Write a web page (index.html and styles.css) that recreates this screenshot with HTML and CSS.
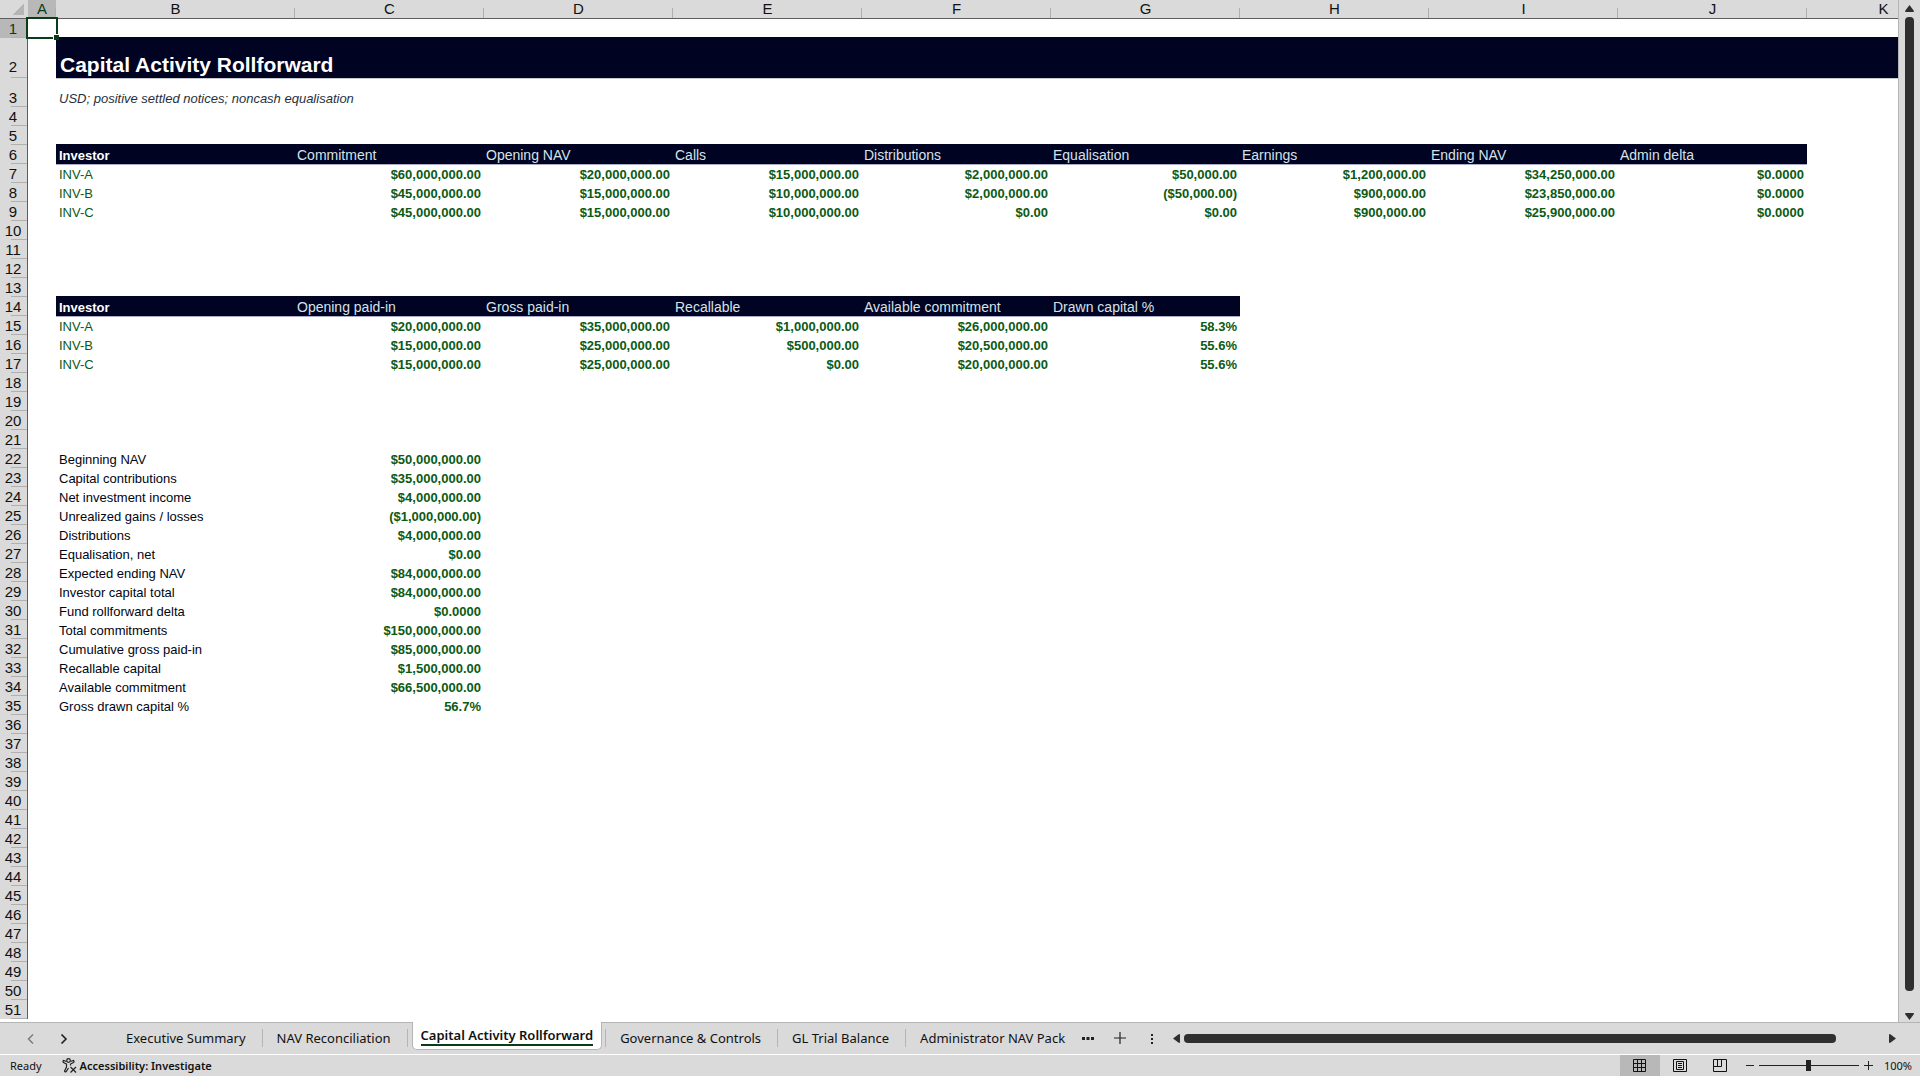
FILE: index.html
```html
<!DOCTYPE html>
<html lang="en">
<head>
    <meta charset="UTF-8">
    <meta name="viewport" content="width=device-width, initial-scale=1.0">
    <title>Capital Activity Rollforward</title>
    <link rel="stylesheet" href="styles.css">
</head>
<body>
    <main class="workspace">
        <div class="grid-area">
            <table class="sheet">
                <colgroup>
                    <col class="col-rownum">
                    <col class="col-a">
                    <col class="col-b">
                    <col class="col-data" span="8">
                    <col class="col-k">
                </colgroup>
                <thead>
                    <tr>
                        <th class="corner"></th>
                        <th class="active">A</th>
                        <th>B</th>
                        <th>C</th>
                        <th>D</th>
                        <th>E</th>
                        <th>F</th>
                        <th>G</th>
                        <th>H</th>
                        <th>I</th>
                        <th>J</th>
                        <th>K</th>
                    </tr>
                </thead>
                <tbody>
                    <tr><th class="active">1</th><td class="selected"><span class="fill-handle"></span></td></tr>
                    <tr class="title-row"><th>2</th><td></td><td class="title" colspan="10">Capital Activity Rollforward</td></tr>
                    <tr class="subtitle-row"><th>3</th><td></td><td class="subtitle" colspan="10">USD; positive settled notices; noncash equalisation</td></tr>
                    <tr><th>4</th></tr>
                    <tr><th>5</th></tr>
                    <tr class="head"><th>6</th><td></td><td>Investor</td><td>Commitment</td><td>Opening NAV</td><td>Calls</td><td>Distributions</td><td>Equalisation</td><td>Earnings</td><td>Ending NAV</td><td>Admin delta</td></tr>
                    <tr class="investor"><th>7</th><td></td><td>INV-A</td><td>$60,000,000.00</td><td>$20,000,000.00</td><td>$15,000,000.00</td><td>$2,000,000.00</td><td>$50,000.00</td><td>$1,200,000.00</td><td>$34,250,000.00</td><td>$0.0000</td></tr>
                    <tr class="investor"><th>8</th><td></td><td>INV-B</td><td>$45,000,000.00</td><td>$15,000,000.00</td><td>$10,000,000.00</td><td>$2,000,000.00</td><td>($50,000.00)</td><td>$900,000.00</td><td>$23,850,000.00</td><td>$0.0000</td></tr>
                    <tr class="investor"><th>9</th><td></td><td>INV-C</td><td>$45,000,000.00</td><td>$15,000,000.00</td><td>$10,000,000.00</td><td>$0.00</td><td>$0.00</td><td>$900,000.00</td><td>$25,900,000.00</td><td>$0.0000</td></tr>
                    <tr><th>10</th></tr>
                    <tr><th>11</th></tr>
                    <tr><th>12</th></tr>
                    <tr><th>13</th></tr>
                    <tr class="head"><th>14</th><td></td><td>Investor</td><td>Opening paid-in</td><td>Gross paid-in</td><td>Recallable</td><td>Available commitment</td><td>Drawn capital %</td></tr>
                    <tr class="investor"><th>15</th><td></td><td>INV-A</td><td>$20,000,000.00</td><td>$35,000,000.00</td><td>$1,000,000.00</td><td>$26,000,000.00</td><td>58.3%</td></tr>
                    <tr class="investor"><th>16</th><td></td><td>INV-B</td><td>$15,000,000.00</td><td>$25,000,000.00</td><td>$500,000.00</td><td>$20,500,000.00</td><td>55.6%</td></tr>
                    <tr class="investor"><th>17</th><td></td><td>INV-C</td><td>$15,000,000.00</td><td>$25,000,000.00</td><td>$0.00</td><td>$20,000,000.00</td><td>55.6%</td></tr>
                    <tr><th>18</th></tr>
                    <tr><th>19</th></tr>
                    <tr><th>20</th></tr>
                    <tr><th>21</th></tr>
                    <tr><th>22</th><td></td><td>Beginning NAV</td><td>$50,000,000.00</td></tr>
                    <tr><th>23</th><td></td><td>Capital contributions</td><td>$35,000,000.00</td></tr>
                    <tr><th>24</th><td></td><td>Net investment income</td><td>$4,000,000.00</td></tr>
                    <tr><th>25</th><td></td><td>Unrealized gains / losses</td><td>($1,000,000.00)</td></tr>
                    <tr><th>26</th><td></td><td>Distributions</td><td>$4,000,000.00</td></tr>
                    <tr><th>27</th><td></td><td>Equalisation, net</td><td>$0.00</td></tr>
                    <tr><th>28</th><td></td><td>Expected ending NAV</td><td>$84,000,000.00</td></tr>
                    <tr><th>29</th><td></td><td>Investor capital total</td><td>$84,000,000.00</td></tr>
                    <tr><th>30</th><td></td><td>Fund rollforward delta</td><td>$0.0000</td></tr>
                    <tr><th>31</th><td></td><td>Total commitments</td><td>$150,000,000.00</td></tr>
                    <tr><th>32</th><td></td><td>Cumulative gross paid-in</td><td>$85,000,000.00</td></tr>
                    <tr><th>33</th><td></td><td>Recallable capital</td><td>$1,500,000.00</td></tr>
                    <tr><th>34</th><td></td><td>Available commitment</td><td>$66,500,000.00</td></tr>
                    <tr><th>35</th><td></td><td>Gross drawn capital %</td><td>56.7%</td></tr>
                    <tr><th>36</th></tr>
                    <tr><th>37</th></tr>
                    <tr><th>38</th></tr>
                    <tr><th>39</th></tr>
                    <tr><th>40</th></tr>
                    <tr><th>41</th></tr>
                    <tr><th>42</th></tr>
                    <tr><th>43</th></tr>
                    <tr><th>44</th></tr>
                    <tr><th>45</th></tr>
                    <tr><th>46</th></tr>
                    <tr><th>47</th></tr>
                    <tr><th>48</th></tr>
                    <tr><th>49</th></tr>
                    <tr><th>50</th></tr>
                    <tr><th>51</th></tr>
                </tbody>
            </table>
        </div>
        <div class="vscroll">
            <button aria-label="Scroll up"><svg width="9" height="7" viewBox="0 0 9 7"><path d="M4.5 0 L9 6 Q9 7 8 7 H1 Q0 7 0 6 Z" fill="#2f2f2f"/></svg></button>
            <div class="thumb"></div>
            <button aria-label="Scroll down"><svg width="9" height="7" viewBox="0 0 9 7"><path d="M4.5 7 L9 1 Q9 0 8 0 H1 Q0 0 0 1 Z" fill="#2f2f2f"/></svg></button>
        </div>
    </main>

    <nav class="tab-bar">
        <div class="tab-nav">
            <button aria-label="Previous sheet"><svg width="8" height="10" viewBox="0 0 8 10"><path d="M6 0.5 L1.5 5 L6 9.5" fill="none" stroke="#777" stroke-width="1.4"/></svg></button>
            <button aria-label="Next sheet"><svg width="8" height="10" viewBox="0 0 8 10"><path d="M1.5 0.5 L6 5 L1.5 9.5" fill="none" stroke="#222" stroke-width="1.6"/></svg></button>
        </div>
        <div class="tabs">
            <button class="tab">Executive Summary</button>
            <button class="tab">NAV Reconciliation</button>
            <button class="tab current"><span>Capital Activity Rollforward</span></button>
            <button class="tab">Governance &amp; Controls</button>
            <button class="tab">GL Trial Balance</button>
            <button class="tab last">Administrator NAV Pack</button>
        </div>
        <div class="tab-tools">
            <button aria-label="More sheets"><svg width="12" height="12" viewBox="0 0 12 12"><path d="M0 5h3v3H0z M4.5 5h3v3h-3z M9 5h3v3H9z" fill="#222"/></svg></button>
            <button aria-label="New sheet"><svg width="12" height="12" viewBox="0 0 12 12"><path d="M6 0v12M0 6h12" stroke="#222" stroke-width="1.2"/></svg></button>
            <button aria-label="Resize tabs"><svg width="12" height="12" viewBox="0 0 12 12"><path d="M5 2h2v2H5z M5 6h2v2H5z M5 10h2v2H5z" fill="#222"/></svg></button>
        </div>
        <div class="hscroll">
            <button aria-label="Scroll left"><svg width="7" height="9" viewBox="0 0 7 9"><path d="M0 4.5 L6 0 Q7 0 7 1 V8 Q7 9 6 9 Z" fill="#2f2f2f"/></svg></button>
            <div class="track"><div class="thumb"></div></div>
            <button aria-label="Scroll right"><svg width="7" height="9" viewBox="0 0 7 9"><path d="M7 4.5 L1 0 Q0 0 0 1 V8 Q0 9 1 9 Z" fill="#2f2f2f"/></svg></button>
        </div>
    </nav>

    <footer class="status-bar">
        <span class="ready">Ready</span>
        <button class="accessibility">
            <svg width="15" height="15" viewBox="0 0 15 15" fill="none" stroke="#222" stroke-width="1.2"><circle cx="6.5" cy="2.5" r="1.8"/><path d="M4.5 3.5 L1.5 2.5 Q0.5 3.5 1.5 4.5 L4.5 6 V9 L2.5 13 Q3 14.5 4.2 13.5 L6.5 10 M8.5 3.5 L11.5 2.5 Q12.5 3.5 11.5 4.5 L8.5 6 V7.5 M8.5 9 L14 14.5 M14 9 L8.5 14.5"/></svg>
            <span>Accessibility: Investigate</span>
        </button>
        <div class="views">
            <button class="view on" aria-label="Normal view"><svg width="14" height="14" viewBox="0 0 14 14" fill="none" stroke="#111"><path d="M0.5 0.5h12v12h-12z M0.5 4.5h12M0.5 8.5h12M4.5 0.5v12M8.5 0.5v12"/></svg></button>
            <button class="view" aria-label="Page layout"><svg width="14" height="14" viewBox="0 0 14 14" fill="none" stroke="#111"><path d="M0.5 0.5h13v12h-13z M3.5 2.5h7v8h-7z M5 4.5h4M5 6.5h4M5 8.5h4"/></svg></button>
            <button class="view" aria-label="Page break preview"><svg width="14" height="14" viewBox="0 0 14 14" fill="none" stroke="#111"><path d="M0.5 0.5h13v12h-13z M4.5 0.5v7M8.5 0.5v7M0.5 7.5h8"/></svg></button>
        </div>
        <div class="zoom">
            <button aria-label="Zoom out"><svg width="8" height="9" viewBox="0 0 8 9"><path d="M0 4.5h8" stroke="#222"/></svg></button>
            <input type="range" min="0" max="100" value="50" aria-label="Zoom">
            <button aria-label="Zoom in"><svg width="9" height="9" viewBox="0 0 9 9"><path d="M0 4.5h9M4.5 0v9" stroke="#222"/></svg></button>
            <button class="zoom-level">100%</button>
        </div>
    </footer>
</body>
</html>
```
FILE: styles.css
```css
* {
    box-sizing: border-box;
}
body {
    margin: 0;
    height: 100vh;
    display: flex;
    flex-direction: column;
    overflow: hidden;
    background-color: #dadada;
    color: #111;
    font-family: "Noto Sans", "Open Sans", sans-serif;
    font-size: 13px;
}
button {
    display: flex;
    align-items: center;
    justify-content: center;
    padding: 0;
    border: none;
    background: none;
    color: inherit;
    font: inherit;
    cursor: pointer;
}
.workspace {
    flex: 1;
    min-height: 0;
    display: flex;
}
.grid-area {
    flex: 1;
    min-width: 0;
    overflow: hidden;
    background-color: white;
}

/* Sheet */
.sheet {
    width: 1960px;
    table-layout: fixed;
    border-collapse: separate;
    border-spacing: 0;
    font-family: "Liberation Sans", Arial, sans-serif;
    font-size: 13px;
    line-height: 15px;
}
.col-rownum, .col-a { width: 28px; }
.col-b { width: 239px; }
.col-data { width: 189px; }
.col-k { width: 153px; }

.sheet tr { height: 19px; }
.sheet th {
    padding: 0 0 1px;
    background-color: #dadada;
    font-size: 15px;
    font-weight: normal;
    line-height: 17px;
    text-align: center;
}
.sheet thead th {
    height: 19px;
    border-bottom: 1px solid #5e5e5e;
    background-image: linear-gradient(#b0b0b0, #b0b0b0);
    background-size: 1px 10px;
    background-position: right bottom;
    background-repeat: no-repeat;
}
.sheet tbody th {
    height: 19px;
    padding-right: 1px;
    border-right: 1px solid #5e5e5e;
    vertical-align: bottom;
    background-image: linear-gradient(#b0b0b0, #b0b0b0);
    background-size: 16px 1px;
    background-position: right bottom;
    background-repeat: no-repeat;
}
.sheet th.active {
    background-color: #b8b8b8;
    color: #0c3c17;
}
.sheet thead th.corner {
    background-image: linear-gradient(135deg, transparent 50%, #b5b5b5 50%);
    background-size: 11px 11px;
    background-position: 13px 4px;
}
.sheet td {
    padding: 0 3px 1px;
    vertical-align: bottom;
    white-space: nowrap;
    color: #000512;
}
.sheet td:nth-child(n+4) {
    color: #0b5a14;
    font-weight: bold;
    text-align: right;
}
.sheet .investor td { color: #0b5a14; }

.sheet .title-row { height: 40px; }
.sheet .subtitle-row { height: 29px; }
.sheet .title-row th { padding-bottom: 3px; }
.sheet td.title {
    padding: 0 4px 1px;
    background-color: #000322;
    box-shadow: 0 -1px #000322, 0 1px #c8c8d0;
    color: white;
    font-size: 21px;
    font-weight: bold;
    line-height: 24px;
}
.sheet td.subtitle {
    color: #26303c;
    font-style: italic;
}
.sheet .head td:nth-child(n+3) {
    padding: 0 2px 1px;
    background-color: #000322;
    box-shadow: 0 -1px #000322, 0 1px #aaaacb;
    color: #d6e2e8;
    font-size: 14px;
    font-weight: normal;
    text-align: left;
}
.sheet .head td:nth-child(3) {
    padding: 0 3px 1px;
    color: white;
    font-size: 13px;
    font-weight: bold;
}

/* Cell cursor */
.selected { position: relative; }
.selected::before {
    content: "";
    position: absolute;
    inset: -2px -2px -1px -2px;
    border: 2px solid #0c3c17;
}
.fill-handle {
    position: absolute;
    right: -3px;
    bottom: -2px;
    z-index: 1;
    width: 6px;
    height: 6px;
    border: 1px solid white;
    border-right: none;
    border-bottom: none;
    background-color: #0c3c17;
}

/* Scrollbars */
.vscroll {
    width: 22px;
    padding: 5px 0 2px;
    display: flex;
    flex-direction: column;
    align-items: center;
    border-left: 1px solid #b5b5b5;
}
.vscroll .thumb {
    flex: 1;
    width: 9px;
    margin: 5px 0 22px;
    border-radius: 4px;
    background-color: #2f2f2f;
}
.hscroll {
    flex: 1;
    padding: 0 24px 0 15px;
    display: flex;
    align-items: center;
    gap: 4px;
}
.hscroll .track {
    flex: 1;
    padding-right: 49px;
}
.hscroll .thumb {
    height: 9px;
    border-radius: 4px;
    background-color: #2f2f2f;
}

/* Sheet tabs */
.tab-bar {
    height: 32px;
    display: flex;
    border-top: 1px solid #b5b5b5;
}
.tab-nav {
    width: 112px;
    padding-left: 27px;
    display: flex;
    gap: 25px;
}
.tabs {
    display: flex;
}
.tab {
    position: relative;
    height: 30px;
    padding: 0 17px 0 14px;
    white-space: nowrap;
}
.tab::after {
    content: "";
    position: absolute;
    right: 0;
    top: 6px;
    width: 1px;
    height: 18px;
    background-color: #b5b5b5;
}
.tab.last::after {
    display: none;
}
.tab.current {
    height: 28px;
    margin: -1px 4px 0;
    padding: 0 8px;
    border: 1px solid #b5b5b5;
    border-top: none;
    border-radius: 0 0 5px 5px;
    background-color: white;
    font-weight: 600;
}
.tab.current::after {
    right: -5px;
    top: 7px;
}
.tab.current span {
    border-bottom: 2px solid #0c3c17;
}
.tab-tools {
    height: 30px;
    display: flex;
    gap: 20px;
}

/* Status bar */
.status-bar {
    height: 22px;
    padding-left: 10px;
    display: flex;
    border-top: 1px solid white;
    font-size: 11px;
    line-height: 21px;
}
.accessibility {
    margin-left: 20px;
    gap: 3px;
    font-weight: 600;
}
.views {
    margin-left: auto;
    display: flex;
}
.view {
    width: 40px;
}
.view.on {
    background-color: #b8b8b8;
}
.zoom {
    padding: 0 8px 0 6px;
    display: flex;
    align-items: center;
    gap: 5px;
}
.zoom input {
    width: 100px;
    height: 12px;
    margin: 0;
    appearance: none;
    background: linear-gradient(#222, #222) center / 100% 1px no-repeat;
}
.zoom input::-webkit-slider-thumb {
    appearance: none;
    width: 5px;
    height: 11px;
    background-color: #222;
}
.zoom-level {
    margin-left: 6px;
}
```
